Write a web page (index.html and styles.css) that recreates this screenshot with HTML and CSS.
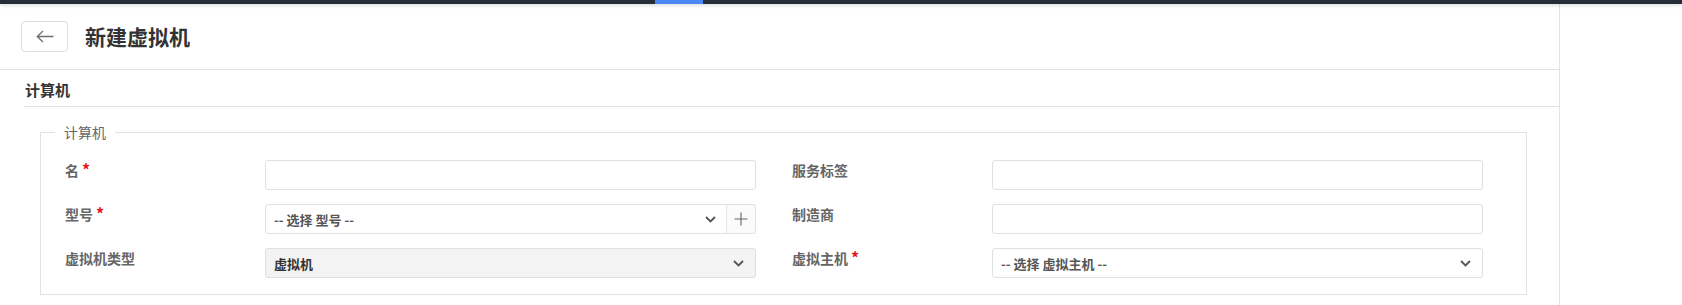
FILE: index.html
```html
<!DOCTYPE html>
<html lang="zh-CN">
<head>
<meta charset="utf-8">
<title>新建虚拟机</title>
<link rel="stylesheet" href="styles.css">
</head>
<body>
<div class="topbar"><div class="topbar-active"></div></div>
<div class="layout">
  <main class="main">
    <header class="page-header">
      <button class="back-btn" type="button" aria-label="返回">
        <svg width="18" height="13" viewBox="0 0 18 13"><path d="M17.5 6.5H1.3M7 1L1.3 6.5 7 12" fill="none" stroke="#6b6f73" stroke-width="1.3"/></svg>
      </button>
      <h1 class="page-title">新建虚拟机</h1>
    </header>
    <div class="section-title">计算机</div>
    <fieldset class="group">
      <legend class="group-legend">计算机</legend>
      <div class="form-grid">
        <div class="field">
          <label class="field-label">名<span class="req">*</span></label>
          <input class="text-input" type="text">
        </div>
        <div class="field">
          <label class="field-label">服务标签</label>
          <input class="text-input" type="text">
        </div>
        <div class="field">
          <label class="field-label">型号<span class="req">*</span></label>
          <div class="input-group">
            <div class="select select-grouped">
              <span class="select-text">-- 选择 型号 --</span>
              <svg class="chev" width="11" height="7" viewBox="0 0 11 7"><path d="M1 1l4.5 4.5L10 1" fill="none" stroke="#555" stroke-width="1.8"/></svg>
            </div>
            <div class="addon">
              <svg width="14" height="14" viewBox="0 0 14 14"><path d="M7 0.5v13M0.5 7h13" stroke="#666" stroke-width="1.1"/></svg>
            </div>
          </div>
        </div>
        <div class="field">
          <label class="field-label">制造商</label>
          <input class="text-input" type="text">
        </div>
        <div class="field">
          <label class="field-label">虚拟机类型</label>
          <div class="select select-disabled">
            <span class="select-text select-value">虚拟机</span>
            <svg class="chev" width="11" height="7" viewBox="0 0 11 7"><path d="M1 1l4.5 4.5L10 1" fill="none" stroke="#555" stroke-width="1.8"/></svg>
          </div>
        </div>
        <div class="field">
          <label class="field-label">虚拟主机<span class="req">*</span></label>
          <div class="select">
            <span class="select-text">-- 选择 虚拟主机 --</span>
            <svg class="chev" width="11" height="7" viewBox="0 0 11 7"><path d="M1 1l4.5 4.5L10 1" fill="none" stroke="#555" stroke-width="1.8"/></svg>
          </div>
        </div>
      </div>
    </fieldset>
  </main>
  <aside class="side"></aside>
</div>
</body>
</html>
```

FILE: styles.css
```css
html, body {
  margin: 0;
  padding: 0;
  background: #fff;
}
body {
  font-family: "Noto Sans CJK SC", "Noto Sans", "Liberation Sans", sans-serif;
  color: #333;
  height: 305px;
  overflow: hidden;
}
.topbar {
  height: 4px;
  background: #252d36;
  position: relative;
  z-index: 2;
  box-shadow: 0 1px 4px rgba(0, 0, 0, 0.18);
}
.topbar-active {
  margin-left: 655px;
  width: 48px;
  height: 4px;
  background: #4a89f3;
}
.layout {
  display: flex;
  height: 301px;
}
.main {
  width: 1559px;
  border-right: 1px solid #e2e2e2;
  flex: none;
}
.side {
  flex: 1;
}
.page-header {
  height: 65px;
  border-bottom: 1px solid #e2e2e2;
  display: flex;
  align-items: center;
  padding-left: 21px;
  gap: 17px;
}
.back-btn {
  width: 47px;
  height: 31px;
  box-sizing: border-box;
  border: 1px solid #ddd;
  border-radius: 4px;
  background: #fff;
  display: flex;
  align-items: center;
  justify-content: center;
  padding: 0;
}
.page-title {
  margin: 0 0 1px 0;
  font-size: 21px;
  font-weight: 700;
  color: #333;
  line-height: 30px;
}
.section-title {
  margin-left: 24px;
  padding: 9px 0 5px 1px;
  line-height: 22px;
  font-size: 15px;
  font-weight: 700;
  color: #333;
  border-bottom: 1px solid #e2e2e2;
}
.group {
  margin: 15px 32px 0 40px;
  padding: 18px 14px 16px 14px;
  border: 1px solid #e2e2e2;
  min-inline-size: 0;
}
.group-legend {
  padding: 0 9px;
  font-size: 14px;
  line-height: 20px;
  color: #666;
}
.form-grid {
  display: grid;
  grid-template-columns: 691px 691px;
  column-gap: 36px;
  row-gap: 14px;
  padding-left: 10px;
}
.field {
  display: grid;
  grid-template-columns: 200px 491px;
  align-items: start;
}
.field-label {
  font-size: 14px;
  line-height: 20px;
  font-weight: 700;
  color: #666;
}
.req {
  color: #e8141c;
  margin-left: 3px;
  font-size: 16px;
  line-height: 16px;
}
.text-input {
  height: 30px;
  box-sizing: border-box;
  border: 1px solid #e0e0e0;
  border-radius: 3px;
  margin: 0;
  padding: 0 8px;
  font: 13px "Noto Sans CJK SC", sans-serif;
  width: 100%;
  outline: none;
}
.input-group {
  display: flex;
  height: 30px;
}
.select {
  height: 30px;
  box-sizing: border-box;
  border: 1px solid #e0e0e0;
  border-radius: 3px;
  display: flex;
  align-items: center;
  justify-content: space-between;
  padding: 0 11px 0 8px;
  background: #fff;
  flex: 1;
}
.select-grouped {
  border-radius: 3px 0 0 3px;
  padding-right: 10px;
}
.select-disabled {
  background: #f3f3f3;
}
.select-text {
  font-size: 13px;
  color: #555;
  font-weight: 700;
}
.select-value {
  color: #333;
}
.chev {
  display: block;
}
.addon {
  width: 30px;
  box-sizing: border-box;
  border: 1px solid #e0e0e0;
  border-left: 1px solid #e6e6e6;
  margin-left: -1px;
  border-radius: 0 3px 3px 0;
  background: #fbfbfb;
  display: flex;
  align-items: center;
  justify-content: center;
}
```
